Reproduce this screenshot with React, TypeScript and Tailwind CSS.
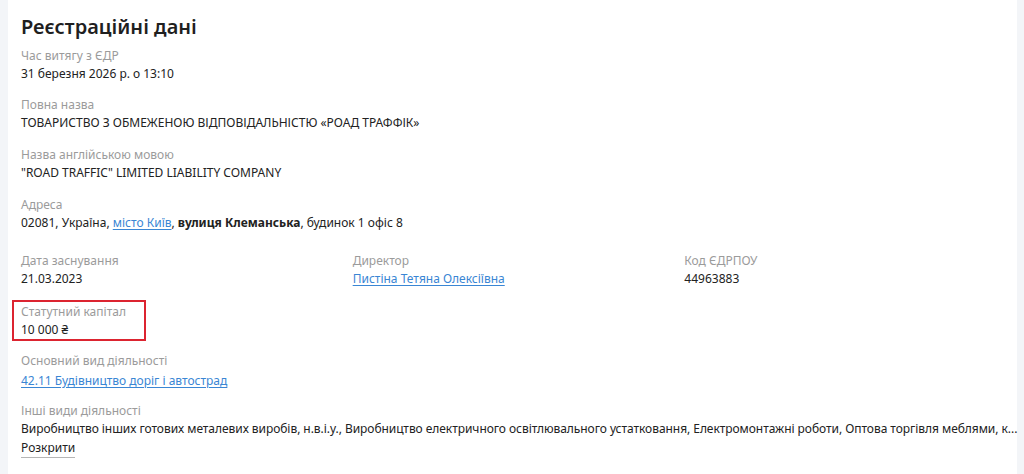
import React from "react";

const font = { fontFamily: '"Noto Sans", "Open Sans", sans-serif' };

function Label({ children }: { children: React.ReactNode }) {
  return <div className="h-[18px] text-[12px] leading-[18px] text-[#9b9b9b] whitespace-nowrap">{children}</div>;
}
function Value({ children }: { children: React.ReactNode }) {
  return <div className="h-[18px] text-[12px] leading-[18px] text-[#222222] whitespace-nowrap">{children}</div>;
}
function Link({ children }: { children: React.ReactNode }) {
  return <a className="text-[#3a86d4] underline underline-offset-2 cursor-pointer">{children}</a>;
}

export default function App() {
  return (
    <div className="w-[1024px] h-[474px] bg-[#f3f5f8] flex overflow-hidden" style={font}>
      <div className="ml-[8px] w-[1009px] bg-white pl-[13px] pr-[1px] pt-[12px] flex flex-col">
        <h1 className="h-[30px] text-[20px] leading-[30px] font-semibold text-[#1f1f1f]">Реєстраційні дані</h1>
        <div className="mt-[5px]">
          <Label>Час витягу з ЄДР</Label>
          <Value>31 березня 2026 р. о 13:10</Value>
        </div>
        <div className="mt-[13px]">
          <Label>Повна назва</Label>
          <Value>ТОВАРИСТВО З ОБМЕЖЕНОЮ ВІДПОВІДАЛЬНІСТЮ «РОАД ТРАФФІК»</Value>
        </div>
        <div className="mt-[14px]">
          <Label>Назва англійською мовою</Label>
          <Value>"ROAD TRAFFIC" LIMITED LIABILITY COMPANY</Value>
        </div>
        <div className="mt-[14px]">
          <Label>Адреса</Label>
          <Value>
            02081, Україна, <Link>місто Київ</Link>, <span className="font-bold">вулиця Клеманська</span>, будинок 1 офіс 8
          </Value>
        </div>
        <div className="mt-[20px] grid grid-cols-3">
          <div>
            <Label>Дата заснування</Label>
            <Value>21.03.2023</Value>
          </div>
          <div>
            <Label>Директор</Label>
            <Value>
              <Link>Пистіна Тетяна Олексіївна</Link>
            </Value>
          </div>
          <div>
            <Label>Код ЄДРПОУ</Label>
            <Value>44963883</Value>
          </div>
        </div>
        <div className="mt-[12px] -ml-[9px] w-[134px] h-[41px] border-2 border-[#dc2430] pl-[7px] pt-[1px]">
          <Label>Статутний капітал</Label>
          <Value>10 000 ₴</Value>
        </div>
        <div className="mt-[11px]">
          <Label>Основний вид діяльності</Label>
          <div className="h-[22px] text-[12px] leading-[22px] whitespace-nowrap">
            <Link>42.11 Будівництво доріг і автострад</Link>
          </div>
        </div>
        <div className="mt-[10px]">
          <Label>Інші види діяльності</Label>
          <Value>
            <span className="tracking-[-0.05px]">
              Виробництво інших готових металевих виробів, н.в.і.у., Виробництво електричного освітлювального устатковання, Електромонтажні роботи, Оптова торгівля меблями, к...
            </span>
          </Value>
          <div className="h-[20px] text-[12px] leading-[20px]">
            <span className="text-[#222222] border-b border-[#b5b5b5] pb-[1px]">Розкрити</span>
          </div>
        </div>
      </div>
    </div>
  );
}
